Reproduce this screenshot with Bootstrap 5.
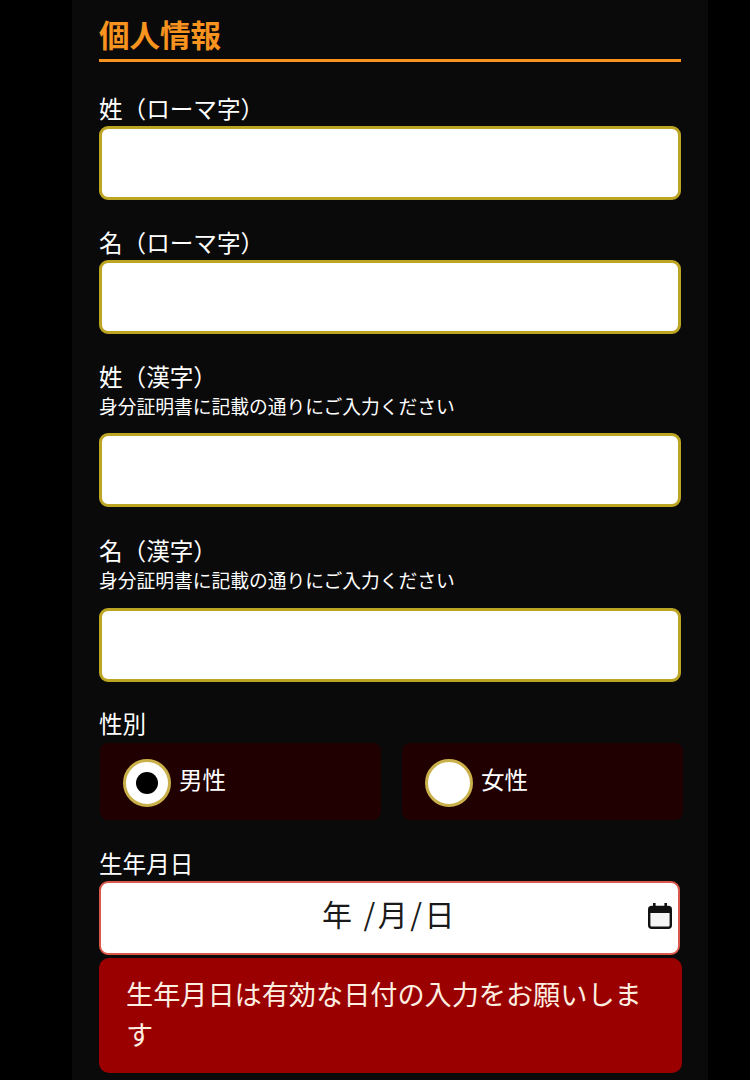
<!DOCTYPE html>
<html lang="ja">
<head>
<meta charset="utf-8">
<title>個人情報</title>
<link href="https://cdn.jsdelivr.net/npm/bootstrap@5.3.0/dist/css/bootstrap.min.css" rel="stylesheet">
<style>
html, body { background: #000; height: 1080px; overflow: hidden; }
body { font-family: "Noto Sans CJK JP", "Liberation Sans", sans-serif; color: #fff; }
.panel-wrap { width: 636px; margin-left: 72px; height: 1080px; background: #0a0a0b; padding: 0 27px; overflow: hidden; }
.sec-title { font-size: 30.5px; font-weight: 700; line-height: 38px; color: #f7931e; margin: 15px 0 0; border-bottom: 3px solid #f7931e; height: 47px; }
.fld-label { font-size: 23.6px; line-height: 32px; margin: 0 0 2px; display: block; }
.fld-hint { font-size: 18.75px; line-height: 23px; margin: 0; display: block; white-space: nowrap; }
.txt-box { display: block; width: 582px; height: 74px; background: #fff; border: 3px solid #bda524; border-radius: 9px; padding: 0 20px; outline: none; }
.g1 { margin-top: 30px; }
.g2 { margin-top: 26px; }
.g3 { margin-top: 27px; }
.g4 { margin-top: 25px; }
.g5 { margin-top: 16px; }
.g6 { margin-top: 17px; }
.choice-row { gap: 21px; margin-top: 4px; margin-left: 1px; width: 583px; }
.choice-item { flex: 1 1 0; height: 77px; background: #200000; border-radius: 8px; padding-left: 23px; gap: 8px; font-size: 23.6px; margin: 0; }
.choice-text { margin-bottom: 4px; }
.round-opt { appearance: none; width: 48px; height: 48px; border-radius: 50%; background: #fff; border: 3px solid #c9b04a; margin: 3px 0 0; flex: none; display: flex; align-items: center; justify-content: center; }
.round-opt:checked::after { content: ""; width: 22px; height: 22px; border-radius: 50%; background: #000; }
.date-box { position: relative; width: 581px; height: 74px; background: #fff; border: 2px solid #d9584a; border-radius: 9px; color: #1a1a1a; font-size: 30px; letter-spacing: 2.5px; padding-bottom: 10px; }
.date-ico { position: absolute; right: 6px; top: 20px; width: 24px; height: 26px; }
.err-box { width: 583px; height: 115px; margin-top: 3px; background: #9b0000; border-radius: 10px; padding: 16px 27px; font-size: 27.15px; line-height: 40px; color: #fdeee0; }
</style>
</head>
<body>
<main class="panel-wrap">
  <h2 class="sec-title">個人情報</h2>
  <div class="g1">
    <label class="fld-label" for="a1">姓（ローマ字）</label>
    <input class="txt-box" id="a1" type="text">
  </div>
  <div class="g2">
    <label class="fld-label" for="a2">名（ローマ字）</label>
    <input class="txt-box" id="a2" type="text">
  </div>
  <div class="g2">
    <label class="fld-label" for="a3">姓（漢字）</label>
    <span class="fld-hint">身分証明書に記載の通りにご入力ください</span>
    <input class="txt-box g5" id="a3" type="text">
  </div>
  <div class="g3">
    <label class="fld-label" for="a4">名（漢字）</label>
    <span class="fld-hint">身分証明書に記載の通りにご入力ください</span>
    <input class="txt-box g6" id="a4" type="text">
  </div>
  <div class="g4">
    <span class="fld-label">性別</span>
    <div class="d-flex choice-row">
      <label class="choice-item d-flex align-items-center"><input class="round-opt" type="radio" name="sex" checked><span class="choice-text">男性</span></label>
      <label class="choice-item d-flex align-items-center"><input class="round-opt" type="radio" name="sex"><span class="choice-text">女性</span></label>
    </div>
  </div>
  <div class="g3">
    <span class="fld-label">生年月日</span>
    <div class="date-box d-flex align-items-center justify-content-center">
      <span>年 /月/日</span>
      <svg class="date-ico" viewBox="0 0 24 26" aria-hidden="true">
        <rect x="1.2" y="4" width="21.6" height="20.8" rx="2.5" fill="#f4f4f4" stroke="#111" stroke-width="2.4"/>
        <rect x="1.2" y="4" width="21.6" height="6" fill="#111"/>
        <rect x="5" y="0" width="2.6" height="6" fill="#111"/>
        <rect x="16.4" y="0" width="2.6" height="6" fill="#111"/>
      </svg>
    </div>
    <div class="err-box">生年月日は有効な日付の入力をお願いします</div>
  </div>
</main>
<script src="https://cdn.jsdelivr.net/npm/bootstrap@5.3.0/dist/js/bootstrap.bundle.min.js"></script>
</body>
</html>
